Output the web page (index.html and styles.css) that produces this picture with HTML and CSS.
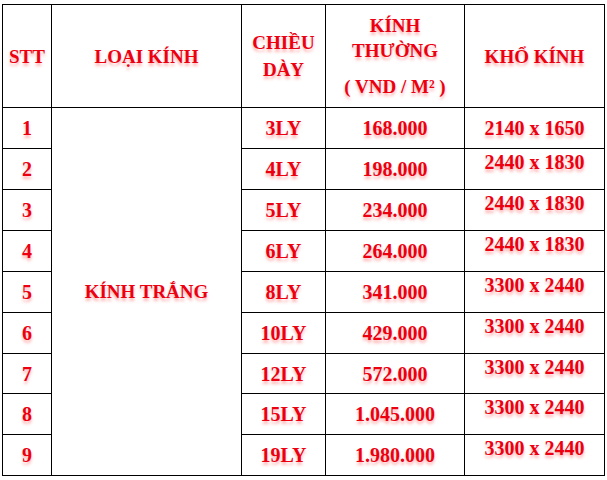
FILE: index.html
```html
<!DOCTYPE html>
<html lang="vi">
<head>
<meta charset="utf-8">
<title>Bảng giá kính trắng</title>
<link rel="stylesheet" href="styles.css">
</head>
<body>
<table class="price">
  <colgroup>
    <col class="c-stt">
    <col class="c-type">
    <col class="c-thick">
    <col class="c-price">
    <col class="c-size">
  </colgroup>
  <thead>
    <tr class="head">
      <th>STT</th>
      <th>LOẠI KÍNH</th>
      <th>CHIỀU<br>DÀY</th>
      <th><span class="l">KÍNH</span><span class="l">THƯỜNG</span><span class="l unit">( VND / M² )</span></th>
      <th>KHỔ KÍNH</th>
    </tr>
  </thead>
  <tbody>
    <tr class="r"><td>1</td><td class="type" rowspan="9">KÍNH TRẮNG</td><td>3LY</td><td>168.000</td><td>2140 x 1650</td></tr>
    <tr class="r"><td>2</td><td>4LY</td><td>198.000</td><td class="up">2440 x 1830</td></tr>
    <tr class="r"><td>3</td><td>5LY</td><td>234.000</td><td class="up">2440 x 1830</td></tr>
    <tr class="r"><td>4</td><td>6LY</td><td>264.000</td><td class="up">2440 x 1830</td></tr>
    <tr class="r"><td>5</td><td>8LY</td><td>341.000</td><td class="up">3300 x 2440</td></tr>
    <tr class="r"><td>6</td><td>10LY</td><td>429.000</td><td class="up">3300 x 2440</td></tr>
    <tr class="r short"><td>7</td><td>12LY</td><td>572.000</td><td class="up">3300 x 2440</td></tr>
    <tr class="r"><td>8</td><td>15LY</td><td>1.045.000</td><td class="up">3300 x 2440</td></tr>
    <tr class="r"><td>9</td><td>19LY</td><td>1.980.000</td><td class="up">3300 x 2440</td></tr>
  </tbody>
</table>
</body>
</html>
```

FILE: styles.css
```css
html, body {
  margin: 0;
  padding: 0;
  background: #ffffff;
}

body {
  padding: 4px 0 0 2px;
}

.price {
  border-collapse: collapse;
  table-layout: fixed;
  width: 603px;
  font-family: "Liberation Serif", "Times New Roman", serif;
  font-weight: bold;
  color: #ec0010;
  text-shadow: 0 3px 3px rgba(255, 40, 40, 0.35);
}

.c-stt { width: 49px; }
.c-type { width: 190px; }
.c-thick { width: 84px; }
.c-price { width: 139px; }
.c-size { width: 140px; }

.price th,
.price td {
  border: 1px solid #000;
  padding: 0;
  text-align: center;
  vertical-align: middle;
}

.head th {
  height: 102px;
  font-size: 19px;
  line-height: 27px;
  font-weight: bold;
}

.head .l {
  display: block;
  line-height: 25px;
}

.head .unit {
  margin-top: 11px;
}

.r td {
  height: 40px;
  font-size: 20px;
  line-height: 22px;
}

.r.short td {
  height: 39px;
}

.r td.type {
  font-size: 19px;
}

.r td.up {
  vertical-align: top;
  padding-top: 2px;
  height: 38px;
}

.r.short td.up {
  height: 37px;
}
```
